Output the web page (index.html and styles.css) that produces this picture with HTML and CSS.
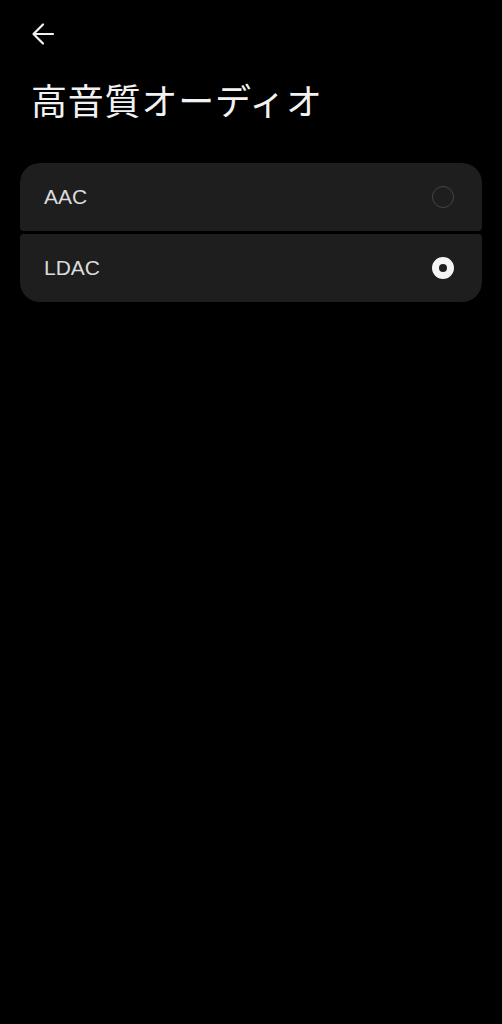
FILE: index.html
```html
<!DOCTYPE html>
<html lang="ja">
<head>
<meta charset="utf-8">
<link rel="stylesheet" href="styles.css">
</head>
<body>
<div class="screen">
  <div class="topbar">
    <svg class="back" width="26" height="26" viewBox="0 0 26 26"><path d="M23 13H3.5M13 3.5L3.5 13L13 22.5" fill="none" stroke="#f2f2f2" stroke-width="2.2" stroke-linecap="round" stroke-linejoin="round"/></svg>
  </div>
  <h1 class="title">高音質オーディオ</h1>
  <div class="list">
    <div class="item first">
      <span class="label">AAC</span>
      <span class="radio"></span>
    </div>
    <div class="item last">
      <span class="label">LDAC</span>
      <span class="radio on"></span>
    </div>
  </div>
</div>
</body>
</html>
```
FILE: styles.css
```css
html, body {
  margin: 0;
  padding: 0;
  background: #000;
}
.screen {
  width: 502px;
  height: 1024px;
  background: #000;
  font-family: "Noto Sans CJK JP", "Noto Sans", Roboto, sans-serif;
  color: #f2f2f2;
}
.topbar {
  height: 68px;
  padding: 21px 0 0 30px;
  box-sizing: border-box;
}
.back {
  display: block;
}
.title {
  margin: 0;
  padding-left: 31px;
  font-size: 36px;
  font-weight: 400;
  line-height: 62px;
  height: 64px;
  letter-spacing: 0.8px;
}
.list {
  margin: 31px 20px 0 20px;
  display: flex;
  flex-direction: column;
  gap: 3px;
}
.item {
  height: 68px;
  background: #1e1e1e;
  display: flex;
  align-items: center;
  justify-content: space-between;
  padding: 0 28px 0 24px;
  border-radius: 4px;
}
.item.first {
  border-radius: 20px 20px 4px 4px;
}
.item.last {
  border-radius: 4px 4px 20px 20px;
}
.label {
  font-family: "Liberation Sans", Arial, sans-serif;
  font-size: 21px;
  color: #dcdcdc;
}
.radio {
  width: 22px;
  height: 22px;
  box-sizing: border-box;
  border-radius: 50%;
  border: 1.5px solid #444;
}
.radio.on {
  border: 7.5px solid #f4f4f4;
  background: #1e1e1e;
}
```
